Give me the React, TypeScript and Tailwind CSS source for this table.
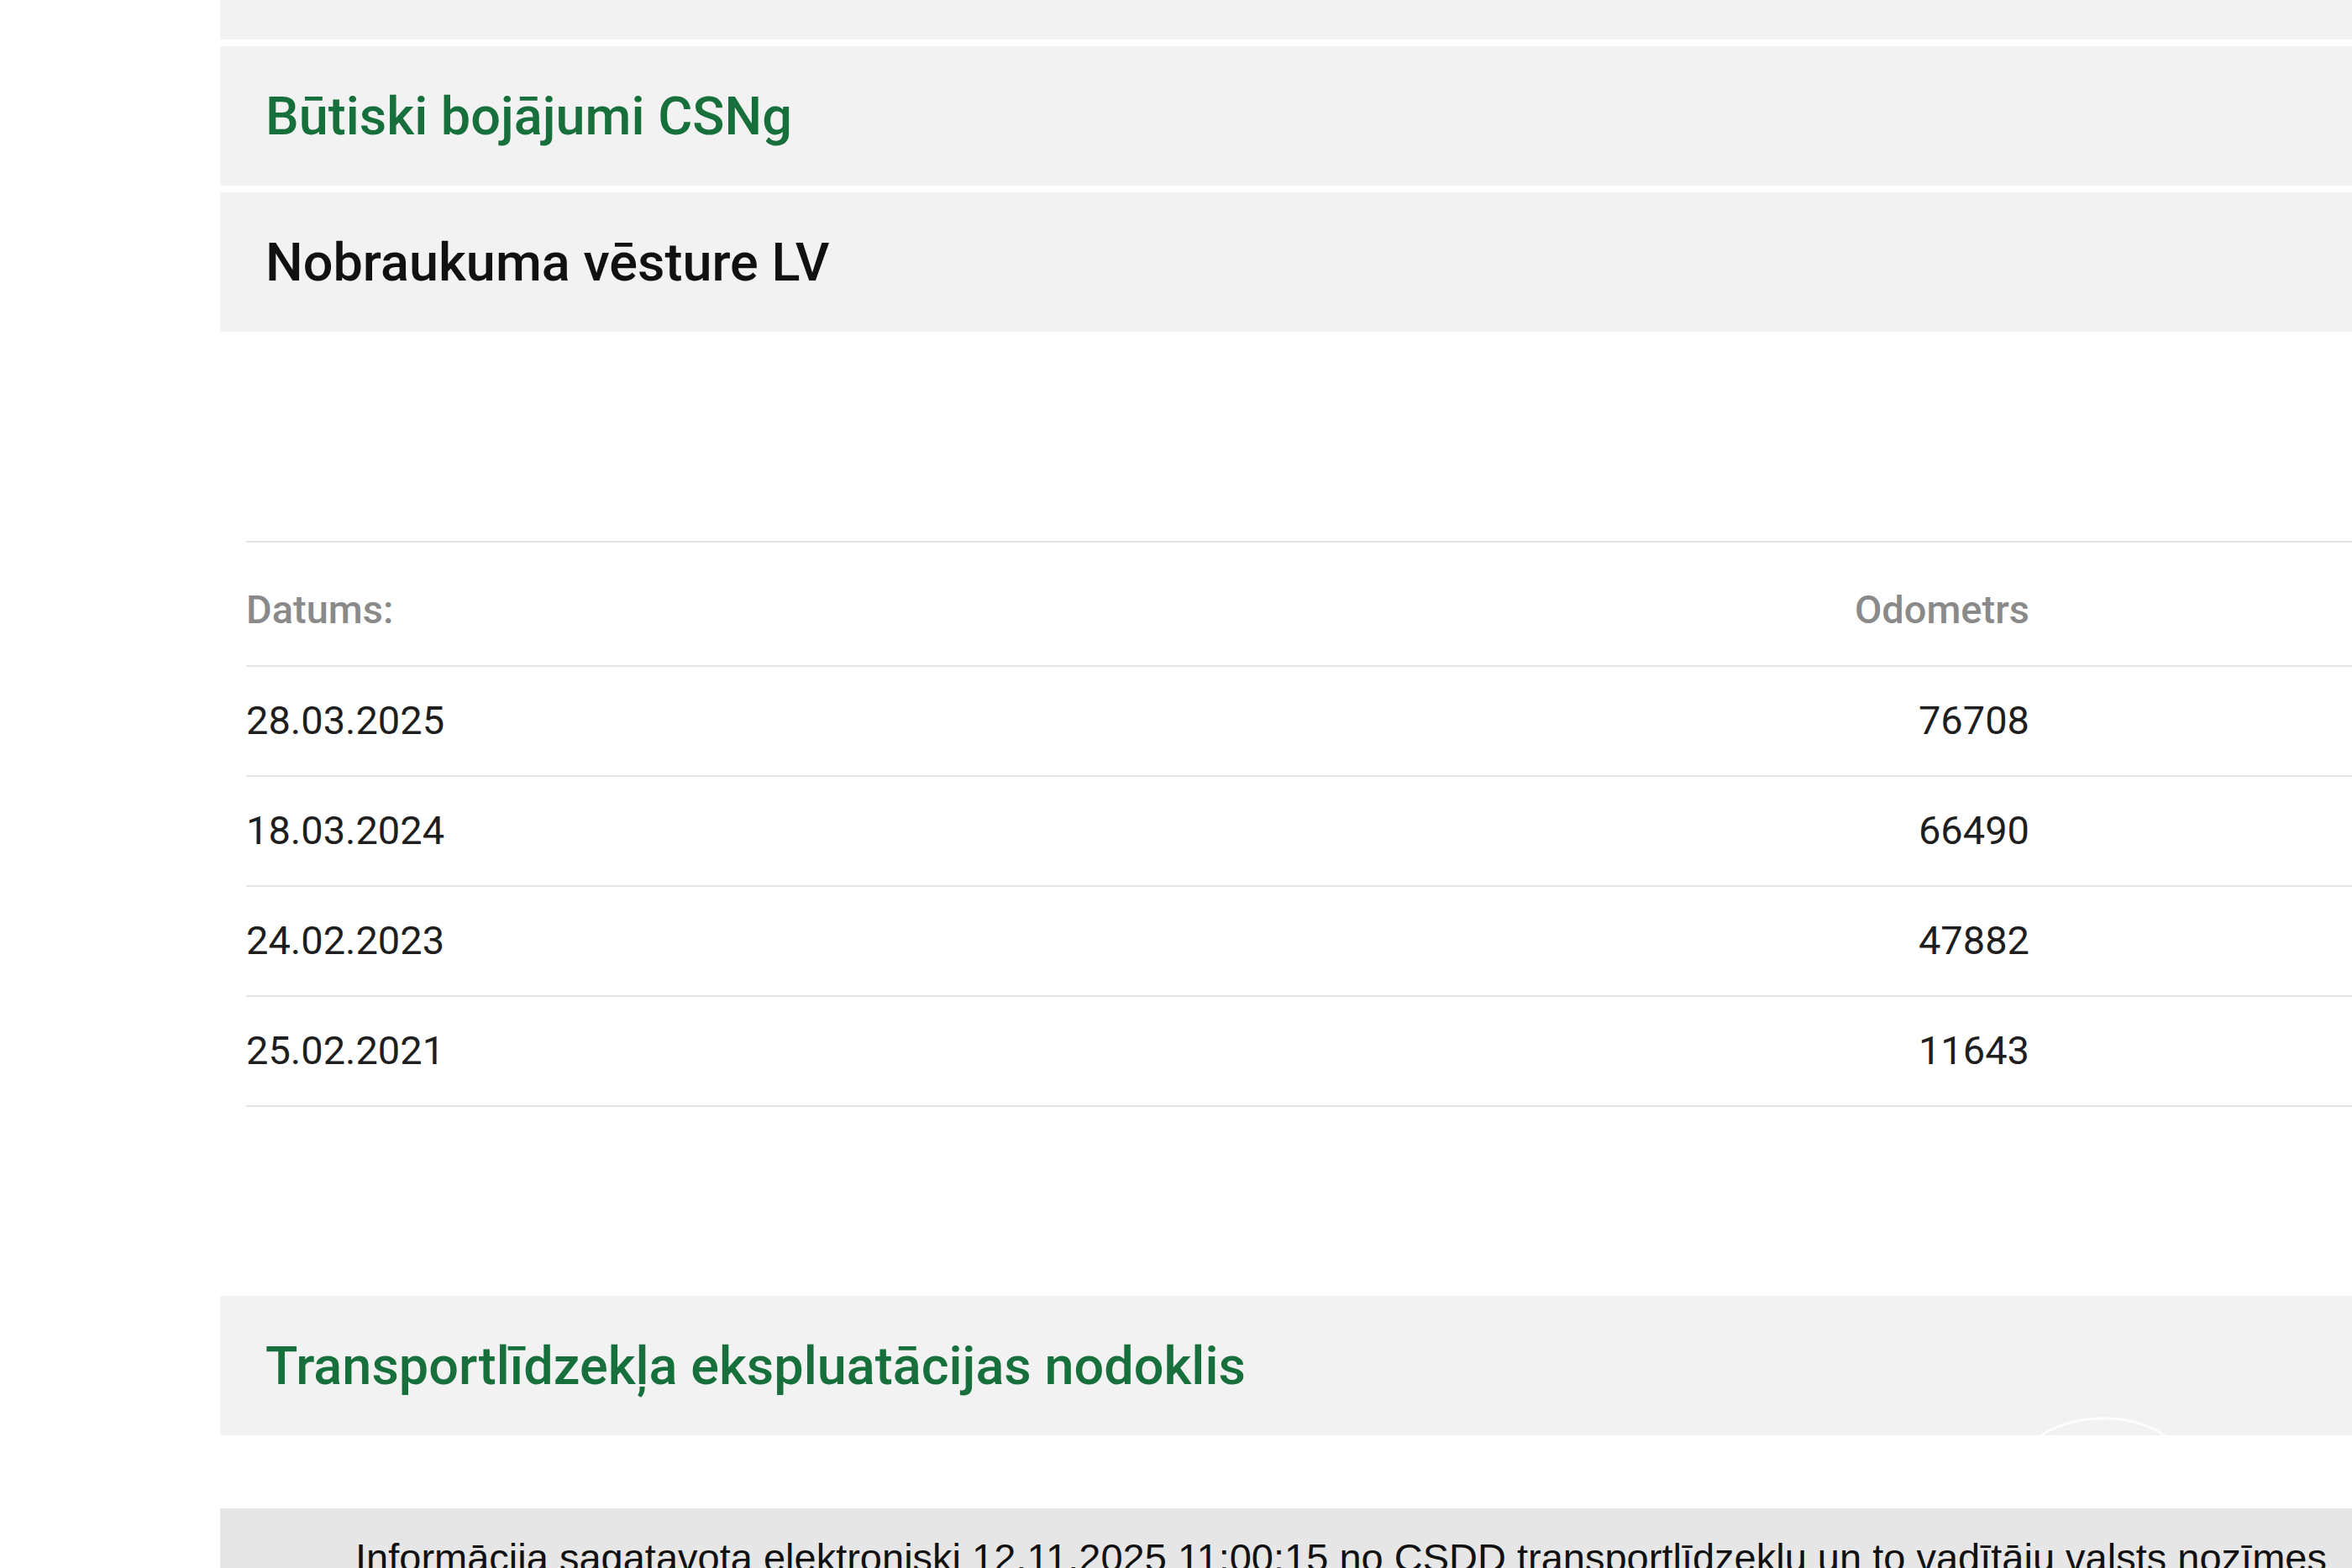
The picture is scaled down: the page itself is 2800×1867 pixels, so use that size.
import React from 'react';

const rows = [
  { date: '28.03.2025', km: '76708' },
  { date: '18.03.2024', km: '66490' },
  { date: '24.02.2023', km: '47882' },
  { date: '25.02.2021', km: '11643' },
];

const Panel = ({ title, green }: { title: string; green?: boolean }) => (
  <div className="flex h-[166px] items-center bg-[#f2f2f2] pl-[54px]">
    <h2
      className={
        green
          ? "font-['Roboto',sans-serif] text-[63px] font-medium leading-none text-[#17703c]"
          : "font-['Roboto',sans-serif] text-[63px] font-medium leading-none text-[#111111]"
      }
    >
      {title}
    </h2>
  </div>
);

export default function App() {
  return (
    <div className="relative min-h-screen w-full overflow-hidden bg-white font-['Roboto',sans-serif]">
      <div className="pl-[262px]">
        <div className="h-[47px] bg-[#f2f2f2]" />
        <div className="mt-[8px]">
          <Panel title="Būtiski bojājumi CSNg" green />
        </div>
        <div className="mt-[8px]">
          <Panel title="Nobraukuma vēsture LV" />
        </div>

        {/* mileage table */}
        <div className="ml-[31px] mt-[249px] border-t-2 border-[#e4e4e4] text-[47px]">
          <div className="flex h-[148px] items-center border-b-2 border-[#e4e4e4] pr-[384px] pt-[14px] font-medium text-[#8a8a8a]">
            <span className="flex-1">Datums:</span>
            <span>Odometrs</span>
          </div>
          {rows.map((r) => (
            <div
              key={r.date}
              className="flex h-[131px] items-center border-b-2 border-[#e4e4e4] pr-[384px] text-[#1e1e1e]"
            >
              <span className="flex-1">{r.date}</span>
              <span>{r.km}</span>
            </div>
          ))}
        </div>

        <div className="mt-[225px]">
          <Panel title="Transportlīdzekļa ekspluatācijas nodoklis" green />
        </div>

        <div className="mt-[87px] h-[200px] bg-[#e6e6e6] pl-[161px] pt-[30px]">
          <p className="whitespace-nowrap font-['Liberation_Sans',Arial,sans-serif] text-[47px] leading-tight text-[#111111]">
            Informācija sagatavota elektroniski 12.11.2025 11:00:15 no CSDD transportlīdzekļu un to vadītāju valsts nozīmes
          </p>
        </div>
      </div>

      {/* faint watermark arc */}
      <svg
        className="pointer-events-none absolute left-[2410px] top-[1680px]"
        width="180"
        height="40"
        viewBox="0 0 180 40"
      >
        <path d="M10 38 C40 6 120 -4 168 30" fill="none" stroke="#ffffff" strokeWidth="3" opacity="0.8" />
      </svg>
    </div>
  );
}
